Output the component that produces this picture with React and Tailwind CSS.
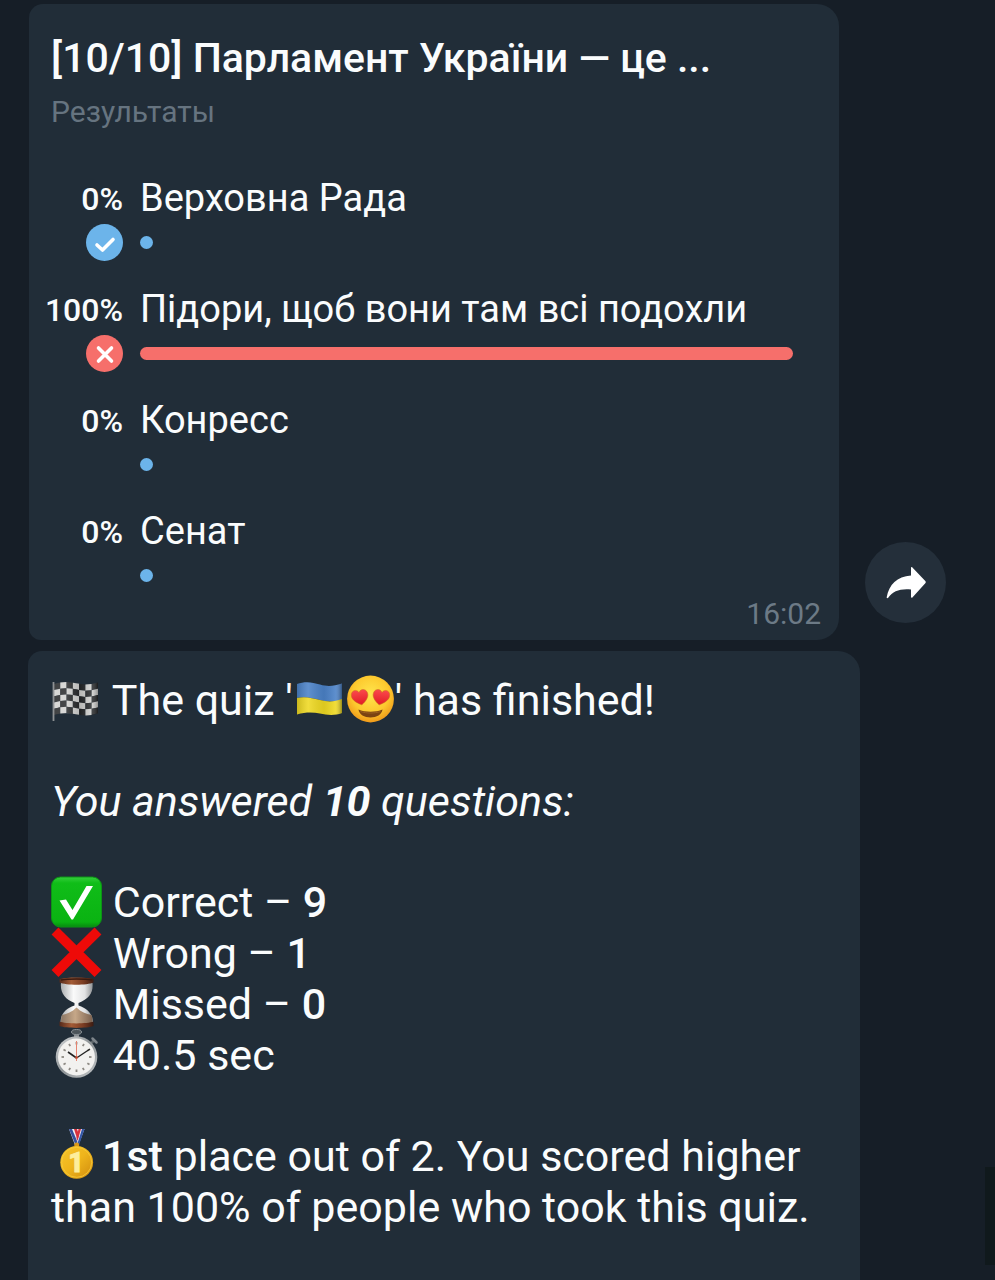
import React from 'react';

const OPTIONS = [
  { text: 'Верховна Рада', percent: 0, mark: 'correct' },
  { text: 'Підори, щоб вони там всі подохли', percent: 100, mark: 'wrong' },
  { text: 'Конресс', percent: 0 },
  { text: 'Сенат', percent: 0 },
];

const FLAG_COLS = 7;
const FLAG_ROWS = 5;

// y offset of the waving cloth at x
const wave = (x) => 9 - 1.6 * Math.sin(((x - 3) / 44) * Math.PI * 2) - (x / 51) * 1.5;

const flagCell = (col, row) => {
  const w = 44 / FLAG_COLS;
  const h = 31 / FLAG_ROWS;
  const x1 = 3 + col * w;
  const x2 = x1 + w;
  const y1 = wave(x1) + row * h;
  const y2 = wave(x2) + row * h;
  return `M${x1} ${y1}L${x2} ${y2}V${y2 + h}L${x1} ${y1 + h}Z`;
};

function Emoji({ label, children }) {
  return (
    <svg role="img" aria-label={label} viewBox="0 0 51 51" className="inline-block h-[51px] w-[51px] overflow-visible align-top">
      {children}
    </svg>
  );
}

function CheckeredFlag() {
  const cells = [];
  for (let row = 0; row < FLAG_ROWS; row++) {
    for (let col = 0; col < FLAG_COLS; col++) {
      cells.push(<path key={`${row}-${col}`} d={flagCell(col, row)} fill={(row + col) % 2 ? '#d2d2d0' : '#26282a'} />);
    }
  }
  return (
    <Emoji label="Checkered flag">
      <defs>
        <linearGradient id="flagShade">
          <stop offset="0" stopColor="#fff" stopOpacity="0.12" />
          <stop offset="0.3" stopColor="#fff" stopOpacity="0.15" />
          <stop offset="0.6" stopColor="#000" stopOpacity="0.12" />
          <stop offset="0.85" stopColor="#fff" stopOpacity="0.15" />
          <stop offset="1" stopColor="#000" stopOpacity="0.3" />
        </linearGradient>
      </defs>
      {cells}
      <path d="M3 9C12 6 22 7 28 9S41 9 47 7.500V38C41 40 34 41 28 40S12 37 3 40Z" fill="url(#flagShade)" />
      <path d="M2.500 7V46" stroke="#8e9194" strokeWidth="1.800" />
    </Emoji>
  );
}

function UkraineFlag() {
  return (
    <Emoji label="Flag of Ukraine">
      <defs>
        <linearGradient id="uaShade">
          <stop offset="0" stopColor="#000" stopOpacity="0.15" />
          <stop offset="0.25" stopColor="#fff" stopOpacity="0.12" />
          <stop offset="0.6" stopColor="#000" stopOpacity="0.08" />
          <stop offset="0.85" stopColor="#fff" stopOpacity="0.1" />
          <stop offset="1" stopColor="#000" stopOpacity="0.35" />
        </linearGradient>
      </defs>
      <path d="M4 9C12 6 19 7 27 9.500S41 11 49 8.500V25C41 27 34 27 27 25S12 21 4 23Z" fill="#4b82c8" />
      <path d="M4 23C12 21 19 23 27 25S41 27 49 24V38C41 41 34 40 27 38.500S12 37 4 39.500Z" fill="#efd922" />
      <path d="M4 9C12 6 19 7 27 9.500S41 11 49 8.500V38C41 41 34 40 27 38.500S12 37 4 39.500Z" fill="url(#uaShade)" />
    </Emoji>
  );
}

const HEART = 'M1 8.500C-5 5.500 -9 2 -8.500 -2.500C-8 -7 -2.500 -8 -0.500 -4C1 -8 6.500 -7.500 7.800 -3C9 1.500 5 5.500 1 8.500Z';

function HeartEyes() {
  return (
    <Emoji label="Heart eyes">
      <defs>
        <radialGradient id="faceFill" cx="0.5" cy="0.4" r="0.6">
          <stop offset="0" stopColor="#ffe64d" />
          <stop offset="0.65" stopColor="#fdc92e" />
          <stop offset="1" stopColor="#f09a1a" />
        </radialGradient>
        <linearGradient id="heartFill" x1="0" y1="0" x2="0" y2="1">
          <stop offset="0" stopColor="#fb4a4c" />
          <stop offset="1" stopColor="#e01b26" />
        </linearGradient>
      </defs>
      <circle cx="26.500" cy="24" r="23.400" fill="url(#faceFill)" />
      <path d={HEART} fill="url(#heartFill)" stroke="#c9701c" strokeWidth="0.500" transform="translate(16 21.500) rotate(-6)" />
      <path d={HEART} fill="url(#heartFill)" stroke="#c9701c" strokeWidth="0.500" transform="translate(37 21.500) scale(-1 1) rotate(-6)" />
      <path d="M14.500 34.500C20.500 37.500 32.500 37.500 38.500 34.500C38 39.500 32.500 42.500 26.500 42.500S15 39.500 14.500 34.500Z" fill="#7b4312" />
      <path d="M16.500 36.500C22.500 38.500 30.500 38.500 36.500 36.500" fill="none" stroke="#9c6020" strokeWidth="1" />
    </Emoji>
  );
}

function CheckBox() {
  return (
    <Emoji label="Correct">
      <defs>
        <linearGradient id="checkFill" x1="0" y1="0" x2="0" y2="1">
          <stop offset="0" stopColor="#35cf3c" />
          <stop offset="0.12" stopColor="#10bd18" />
          <stop offset="0.9" stopColor="#0ab312" />
          <stop offset="1" stopColor="#078a10" />
        </linearGradient>
      </defs>
      <rect x="0.500" y="0" width="50" height="50" rx="9" fill="url(#checkFill)" stroke="#0c9416" strokeWidth="1" />
      <path d="M8.500 23.500L15 22.500L21.500 33L35.500 9H42L22 42.500H20.500Z" fill="#fff" />
    </Emoji>
  );
}

function CrossMark() {
  return (
    <Emoji label="Wrong">
      <path d="M4 3L47 45.500M47 3L4 45.500" stroke="#ee0a08" strokeWidth="9.800" />
    </Emoji>
  );
}

function Hourglass() {
  return (
    <Emoji label="Missed">
      <defs>
        <linearGradient id="woodFill">
          <stop offset="0" stopColor="#54291a" />
          <stop offset="0.35" stopColor="#a35b36" />
          <stop offset="0.7" stopColor="#7a3c22" />
          <stop offset="1" stopColor="#3c1c12" />
        </linearGradient>
        <linearGradient id="glassFill">
          <stop offset="0" stopColor="#a9acae" />
          <stop offset="0.4" stopColor="#fafafa" />
          <stop offset="0.75" stopColor="#e2e3e4" />
          <stop offset="1" stopColor="#8c8f91" />
        </linearGradient>
        <linearGradient id="sandFill">
          <stop offset="0" stopColor="#8b7664" />
          <stop offset="0.45" stopColor="#c6a788" />
          <stop offset="1" stopColor="#7b6250" />
        </linearGradient>
      </defs>
      <path d="M10 4H41.500C42.500 14 38 20 27.500 24V26.500C37 30 42 35 42 44H9.500C9.500 35 14 30 23.500 26.500V24C14 20 9 14 10 4Z" fill="url(#glassFill)" />
      <path d="M11 36C16 35 21 33 25.500 28.500C30 33 35 35 40.500 36C41.500 39 41.500 42 41.500 45H10C10 42 10 39 11 36Z" fill="url(#sandFill)" />
      <path d="M8.500 0C15 -2 36 -2 42.500 0V3.500C36 6.500 15 6.500 8.500 3.500Z" fill="url(#woodFill)" />
      <path d="M10 1C17 -0.500 34 -0.500 41 1" fill="none" stroke="#3a1a10" strokeWidth="1.500" />
      <path d="M8.500 42.500C15 45 36 45 42.500 42.500V47C36 49.500 15 49.500 8.500 47Z" fill="url(#woodFill)" />
    </Emoji>
  );
}

function Stopwatch() {
  const ticks = Array.from({ length: 12 }, (_, i) => i * 30);
  return (
    <Emoji label="Time">
      <defs>
        <linearGradient id="rimFill" x1="0" y1="0" x2="1" y2="1">
          <stop offset="0" stopColor="#d3d6d8" />
          <stop offset="0.5" stopColor="#8e9396" />
          <stop offset="1" stopColor="#c6c9cb" />
        </linearGradient>
      </defs>
      <rect x="23" y="3" width="5" height="6" fill="#888d91" />
      <ellipse cx="25.500" cy="2" rx="5" ry="2.500" fill="#4b545a" stroke="#8b9297" strokeWidth="1" />
      <path d="M39 14L43.500 10" stroke="#5b6368" strokeWidth="3" />
      <path d="M41.500 8.500L45.500 12.500" stroke="#7d848a" strokeWidth="2.500" strokeLinecap="round" />
      <circle cx="25.500" cy="27" r="20.800" fill="url(#rimFill)" />
      <circle cx="25.500" cy="27" r="18.500" fill="#f2f1ef" />
      {ticks.map(angle => (
        <path key={angle} d="M25.500 12V14.500" stroke="#8d8983" strokeWidth="1.800" transform={`rotate(${angle} 25.500 27)`} />
      ))}
      <path d="M25.500 28L17 22" stroke="#222" strokeWidth="1.600" />
      <path d="M25.500 28L39 19" stroke="#222" strokeWidth="1.300" />
      <path d="M25.500 31V11" stroke="#e58370" strokeWidth="1" />
      <circle cx="25.500" cy="27.500" r="1.300" fill="#c7492f" />
    </Emoji>
  );
}

function Medal() {
  return (
    <Emoji label="Gold medal">
      <defs>
        <linearGradient id="goldFill" x1="0" y1="0" x2="1" y2="1">
          <stop offset="0" stopColor="#f7c52c" />
          <stop offset="0.5" stopColor="#eeb41b" />
          <stop offset="1" stopColor="#cf8a0e" />
        </linearGradient>
      </defs>
      <path d="M18 -2H33.500L27.500 14H24Z" fill="#eef0f5" />
      <path d="M18 -2H21L26.500 11L24.500 14Z" fill="#34509c" />
      <path d="M23 -2H26L28 4L26.500 9Z" fill="#d8323e" />
      <path d="M31 -2H33.500L28 14H26Z" fill="#3457a8" />
      <path d="M27.500 -2H30L26.500 10L25.500 7Z" fill="#d8323e" />
      <circle cx="25.700" cy="14" r="2.500" fill="#d9981a" />
      <circle cx="25.700" cy="31.300" r="16.400" fill="url(#goldFill)" />
      <circle cx="25.700" cy="31.300" r="15" fill="none" stroke="#f6cb3c" strokeWidth="0.800" />
      <text x="25" y="41" textAnchor="middle" fill="#fdee9c" stroke="#fdee9c" strokeWidth="0.800" className="font-['Roboto',sans-serif] text-[27px] font-black">1</text>
    </Emoji>
  );
}

function Mark({ type }) {
  if (type === 'correct') {
    return (
      <svg role="img" aria-label="Correct answer" viewBox="0 0 37 37" className="h-[37px] w-[37px]">
        <circle cx="18.500" cy="18.500" r="18.500" fill="#6cb4ea" />
        <path d="M11 21L16.500 26L27 15.500" fill="none" stroke="#fff" strokeWidth="3.600" strokeLinecap="round" strokeLinejoin="round" />
      </svg>
    );
  }
  if (type === 'wrong') {
    return (
      <svg role="img" aria-label="Your answer" viewBox="0 0 37 37" className="h-[37px] w-[37px]">
        <circle cx="18.500" cy="18.500" r="18.500" fill="#f66f6b" />
        <path d="M12.500 13L25.500 26M25.500 13L12.500 26" fill="none" stroke="#fff" strokeWidth="3.600" strokeLinecap="round" />
      </svg>
    );
  }
  return null;
}

function PollOption({ option }) {
  return (
    <li className="grid grid-cols-[94px_1fr] gap-x-[17px] gap-y-[2px] pr-[46px] pb-[26px] last:pb-0">
      <div className="text-right text-[32px] leading-[46px] font-medium">{option.percent}%</div>
      <div className="text-[38px] leading-[44px]">{option.text}</div>
      <div className="flex h-[37px] justify-end"><Mark type={option.mark} /></div>
      <div className="flex h-[37px] items-center">
        <div
          className={`h-[13px] min-w-[13px] rounded-full ${option.mark === 'wrong' ? 'bg-[#f66f6b]' : 'bg-[#6cb4ea]'}`}
          style={{ width: `${option.percent}%` }}
        />
      </div>
    </li>
  );
}

function App() {
  return (
    <main className="relative flex min-h-screen flex-col gap-[11px] overflow-hidden bg-[#161e27] pt-1 font-['Roboto',sans-serif] text-[#fafcfd]">
      <div className="flex items-end gap-[26px] pl-[29px]">
        <section className="w-full max-w-[810px] rounded-tl-[14px] rounded-tr-[22px] rounded-br-[22px] rounded-bl-[12px] bg-[#212d38] pt-[30px] pb-2">
          <h2 className="px-[22px] text-[41px] leading-[48px] font-medium">[10/10] Парламент України — це ...</h2>
          <p className="mt-3 px-[22px] text-[30px] leading-[36px] text-[#667480]">Результаты</p>
          <ul className="mt-[46px]">
            {OPTIONS.map(option => <PollOption key={option.text} option={option} />)}
          </ul>
          <p className="mt-[2px] pr-[18px] text-right text-[30px] leading-[36px] text-[#6c7a86]">16:02</p>
        </section>
        <button type="button" aria-label="Forward" className="mb-[17px] flex h-[81px] w-[81px] shrink-0 items-center justify-center rounded-full bg-[#242f3a]">
          <svg viewBox="0 0 40 32" className="h-8 w-10" fill="#fff">
            <path d="M25 0.800C25 0 25.800 -0.200 26.400 0.400L39.300 14C39.900 14.700 39.900 15.600 39.300 16.300L26.400 30.500C25.800 31.100 25 30.800 25 30V22.500C14 21.500 7 24 2.200 30.800C1.600 31.600 0.500 31.300 0.700 30.300C3 17.500 11 9.500 25 8.500Z" />
          </svg>
        </button>
      </div>

      <section className="ml-7 flex w-full max-w-[832px] flex-1 flex-col gap-[50px] rounded-tl-[14px] rounded-tr-[22px] bg-[#212d38] px-[23px] pt-6 text-[43px] leading-[51px]">
        <p><CheckeredFlag /> The quiz '<UkraineFlag /><HeartEyes />' has finished!</p>
        <p className="italic">You answered <b className="font-bold">10</b> questions:</p>
        <ul>
          <li><CheckBox /> Correct – <b className="font-medium">9</b></li>
          <li><CrossMark /> Wrong – <b className="font-medium">1</b></li>
          <li><Hourglass /> Missed – <b className="font-medium">0</b></li>
          <li><Stopwatch /> 40.5 sec</li>
        </ul>
        <p><Medal /><b className="font-medium">1st</b> place out of 2. You scored higher than 100% of people who took this quiz.</p>
      </section>

      {/* scroll thumb */}
      <div className="absolute right-0 bottom-[15px] h-[98px] w-[10px] bg-[#10191c]" />
    </main>
  );
}

export default App;
